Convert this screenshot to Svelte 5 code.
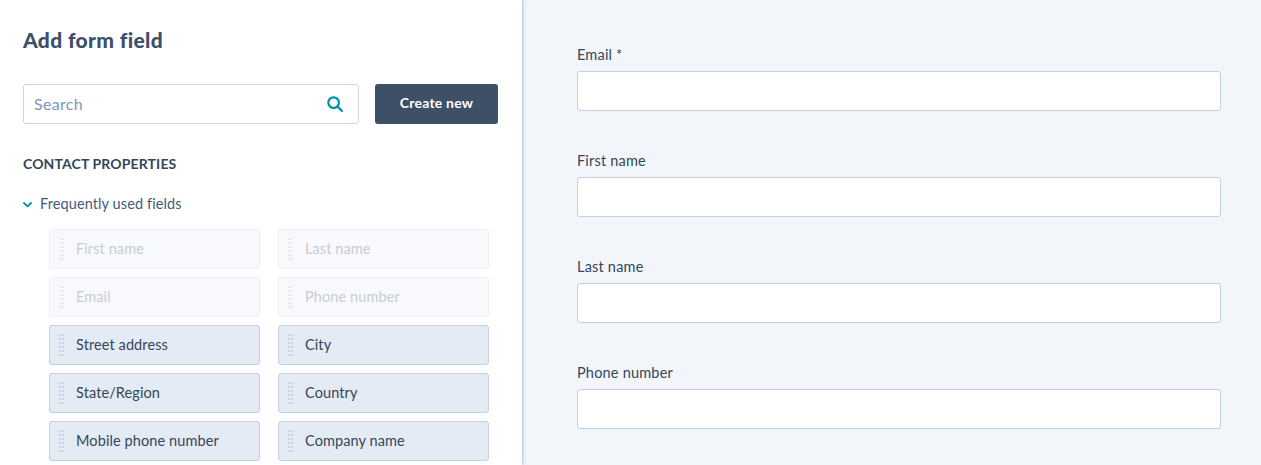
<script>
  const fields = [
    { name: 'First name', off: true }, { name: 'Last name', off: true },
    { name: 'Email', off: true }, { name: 'Phone number', off: true },
    { name: 'Street address' }, { name: 'City' },
    { name: 'State/Region' }, { name: 'Country' },
    { name: 'Mobile phone number' }, { name: 'Company name' }
  ];
  const formFields = ['Email *', 'First name', 'Last name', 'Phone number'];
  const rows = [0, 4, 8, 12, 16, 20];
</script>

<div class="page">
  <aside class="panel">
    <h1>Add form field</h1>
    <div class="tools">
      <div class="search">
        <span>Search</span>
        <svg width="18" height="18" viewBox="0 0 18 18" fill="none" stroke="#0091ae" stroke-width="2.2" stroke-linecap="round"><circle cx="7.6" cy="7.6" r="5.3"/><path d="M11.6 11.6 16 16"/></svg>
      </div>
      <div class="create"><span>Create new</span></div>
    </div>
    <h2>CONTACT PROPERTIES</h2>
    <div class="group">
      <svg width="9" height="6" viewBox="0 0 9 6" fill="none" stroke="#0091ae" stroke-width="1.8" stroke-linecap="round" stroke-linejoin="round"><path d="M1 1l3.5 3.4L8 1"/></svg>
      <span>Frequently used fields</span>
    </div>
    <div class="grid">
      {#each fields as f}
        <div class="item" class:off={f.off}>
          <svg class="grip" width="5" height="22" viewBox="0 0 5 22">
            {#each rows as y}
              <rect x="0" {y} width="2" height="2" />
              <rect x="3" {y} width="2" height="2" />
            {/each}
          </svg>
          <span>{f.name}</span>
        </div>
      {/each}
    </div>
  </aside>
  <main class="form">
    {#each formFields as label}
      <div class="field">
        <div class="label">{label}</div>
        <div class="input"></div>
      </div>
    {/each}
  </main>
</div>

<style>
  :global(body) { margin: 0; background: #fff; }
  .page {
    display: flex;
    width: 1261px;
    height: 465px;
    overflow: hidden;
    font-family: Lato, "Noto Sans", sans-serif;
    color: #33475b;
    box-sizing: border-box;
  }
  .panel {
    width: 522px;
    flex: none;
    box-sizing: border-box;
    padding: 0 0 0 23px;
    background: #fff;
    position: relative;
    z-index: 1;
    box-shadow: 1px 0 3px rgba(120, 150, 185, 0.55);
  }
  h1 {
    margin: 0;
    padding-top: 27px;
    height: 84px;
    box-sizing: border-box;
    font-size: 21px;
    line-height: 26px;
    font-weight: 900;
    letter-spacing: 0.35px;
    color: #3b5068;
  }
  .tools { display: flex; gap: 16px; }
  .search {
    width: 336px;
    height: 40px;
    flex: none;
    box-sizing: border-box;
    border: 1px solid #cbd6e2;
    border-radius: 3px;
    display: flex;
    align-items: center;
    justify-content: space-between;
    padding: 0 14px 2px 10px;
    font-size: 16px;
    letter-spacing: 0.3px;
    color: #7c98b6;
  }
  .search svg { margin-top: 2px; }
  .create {
    width: 123px;
    height: 40px;
    flex: none;
    box-sizing: border-box;
    padding-bottom: 3px;
    border-radius: 3px;
    background: #3e5068;
    color: #fff;
    font-size: 14px;
    font-weight: 700;
    letter-spacing: 0.2px;
    display: flex;
    align-items: center;
    justify-content: center;
  }
  h2 {
    margin: 0;
    padding-top: 31px;
    font-size: 14px;
    line-height: 18px;
    font-weight: 700;
    letter-spacing: 0.12px;
    color: #33475b;
  }
  .group {
    display: flex;
    align-items: center;
    gap: 8px;
    margin-top: 22px;
    height: 18px;
    font-size: 14.5px;
    letter-spacing: 0.1px;
    color: #425b76;
  }
  .group span { margin-top: -1px; }
  .group svg { flex: none; margin-top: 1px; }
  .grid {
    display: grid;
    grid-template-columns: 211px 211px;
    column-gap: 18px;
    row-gap: 8px;
    margin: 16px 0 0 26px;
  }
  .item {
    height: 40px;
    box-sizing: border-box;
    border: 1px solid #c3d0e0;
    border-radius: 3px;
    background: #e5ebf4;
    display: flex;
    align-items: center;
    padding-left: 9px;
    font-size: 14.5px;
    letter-spacing: 0.1px;
    color: #33475b;
  }
  .item span { margin-top: -1px; }
  .item.off {
    border-color: #eef1f6;
    background: #f8f9fc;
    color: #c7ccd4;
  }
  .grip {
    flex: none;
    margin-right: 12px;
    fill: #c8d3e1;
  }
  .item.off .grip { fill: #e6eaf0; }
  .form {
    flex: 1;
    background: #f2f6fa;
    padding: 45px 40px 0 55px;
  }
  .field { height: 106px; }
  .label {
    height: 18px;
    line-height: 19px;
    font-size: 14.5px;
    letter-spacing: 0.2px;
    color: #33475b;
    margin-bottom: 8px;
  }
  .input {
    height: 40px;
    box-sizing: border-box;
    background: #fff;
    border: 1px solid #c3d0e0;
    border-radius: 3px;
  }
</style>
